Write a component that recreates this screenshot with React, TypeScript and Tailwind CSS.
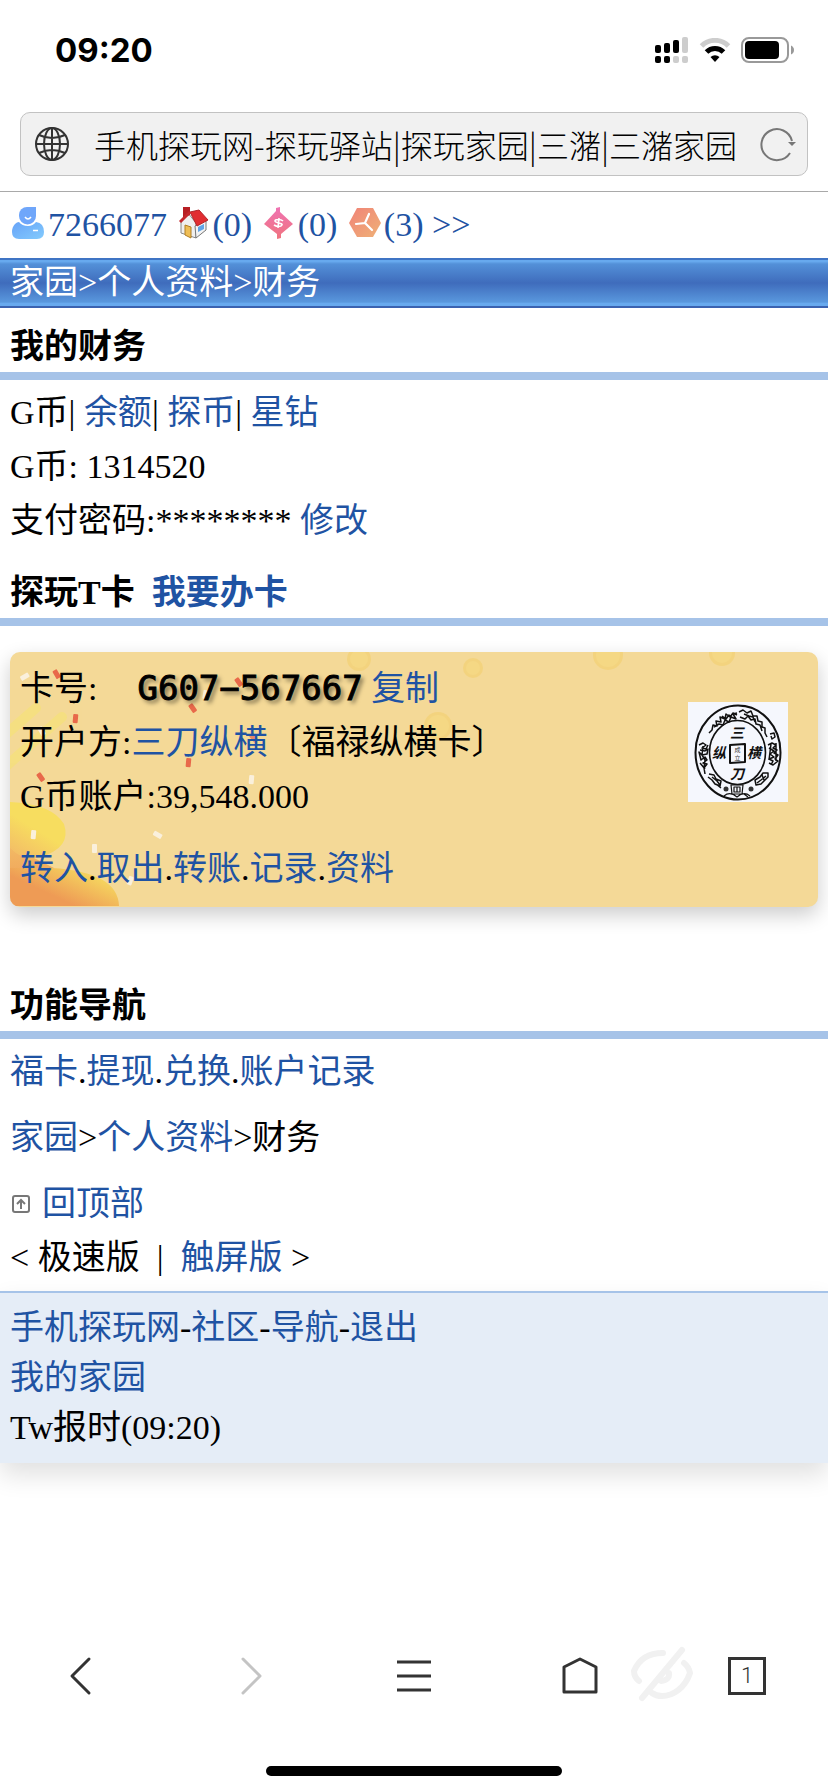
import type { ReactNode } from "react";

function A({ children }: { children: ReactNode }) {
  return (
    <a href="#" className="text-[#1f53a3]">
      {children}
    </a>
  );
}

function SectionTitle({ children }: { children: ReactNode }) {
  return (
    <h2 className="border-b-8 border-[#a6c3e8] px-[10px] pt-[14px] text-[34px] leading-[50px] font-bold">
      {children}
    </h2>
  );
}

function StatusBar() {
  return (
    <div className="flex h-[100px] items-center justify-between pr-[33px] pl-[55px]">
      <span className="font-[Inter,sans-serif] text-[33px] leading-none font-bold">09:20</span>
      <div className="flex items-center gap-[10px]">
        <svg width="34" height="26" viewBox="0 0 34 26" aria-hidden="true">
          <rect x="0" y="8" width="6" height="8" rx="2" />
          <rect x="9" y="6" width="6" height="10" rx="2" />
          <rect x="18" y="3" width="6" height="13" rx="2" />
          <rect x="27" y="0" width="6" height="16" rx="2" fill="#cdcdcd" />
          <rect x="0" y="19" width="6" height="7" rx="2" />
          <rect x="9" y="19" width="6" height="7" rx="2" />
          <rect x="18" y="19" width="6" height="7" rx="2" fill="#cdcdcd" />
          <rect x="27" y="19" width="6" height="7" rx="2" fill="#cdcdcd" />
        </svg>
        <svg width="32" height="24" viewBox="0 0 32 24" fill="none" aria-hidden="true">
          <path d="M2.500 8A19 19 0 0 1 29.500 8" stroke="#cdcdcd" strokeWidth="5" />
          <path d="M7.500 14A12 12 0 0 1 24.500 14" stroke="#000" strokeWidth="5" />
          <path d="M16 24l-4.500-5a7 7 0 0 1 9 0z" fill="#000" />
        </svg>
        <svg width="54" height="26" viewBox="0 0 54 26" aria-hidden="true">
          <rect x="1" y="1" width="46" height="24" rx="7" fill="none" stroke="#999" strokeWidth="2" />
          <rect x="4" y="4" width="34" height="18" rx="4" />
          <path d="M50 8.500q3 1.500 3 4.500t-3 4.500z" fill="#999" />
        </svg>
      </div>
    </div>
  );
}

function AddressBar() {
  return (
    <div className="border-b border-[#a9a9a9] px-5 pt-3 pb-[15px]">
      <div className="flex h-16 items-center rounded-[10px] border border-[#c2c2c2] bg-[#f1f1f1] pr-[11px] pl-[13px]">
        <svg width="36" height="36" viewBox="0 0 36 36" fill="none" stroke="#333" strokeWidth="2" aria-hidden="true">
          <circle cx="18" cy="18" r="16" />
          <ellipse cx="18" cy="18" rx="8" ry="16" />
          <path d="M18 2v32M2 18h32M5 9q13 6 26 0M5 27q13-6 26 0" />
        </svg>
        <button className="min-w-0 flex-1 overflow-hidden pl-6 text-left font-['Noto_Sans_CJK_SC',sans-serif] text-[32px] leading-[48px] font-light whitespace-nowrap">
          手机探玩网-探玩驿站|探玩家园|三潴|三潴家园
        </button>
        <button aria-label="刷新">
          <svg width="36" height="36" viewBox="0 0 36 36" aria-hidden="true">
            <path d="M30 27A15.500 15.500 0 1 1 32 15" fill="none" stroke="#777" strokeWidth="2" />
            <path d="M28 16h8l-4 4z" fill="#777" />
          </svg>
        </button>
      </div>
    </div>
  );
}

function UserIcon() {
  return (
    <svg className="inline-block align-[-3px]" width="32" height="32" viewBox="0 0 32 32" aria-hidden="true">
      <defs>
        <linearGradient id="user" x1="0" y1="0" x2="1" y2="1">
          <stop offset="0" stopColor="#67a3f8" />
          <stop offset="1" stopColor="#83cbfd" />
        </linearGradient>
      </defs>
      <path d="M7 15q-2 0-4 2-3 3-3 8 0 7 7 7h18q7 0 7-7 0-9-8-10-3 4-8 4-6 0-9-4z" fill="url(#user)" />
      <path d="M7 8a8 8 0 0 1 8-8h9v9a8.500 8.500 0 0 1-17 0z" fill="#6fa6fa" />
      <path d="M13 10q3 4 6 0M21 23.500h5" fill="none" stroke="#fff" strokeWidth="1.500" />
    </svg>
  );
}

function HouseIcon() {
  return (
    <svg className="inline-block align-[-3px]" width="30" height="32" viewBox="0 0 30 32" aria-hidden="true">
      <path d="M2 13l7-7 8 10v15L2 26z" fill="#efefef" stroke="#8a8a8a" />
      <path d="M16 19l11-7v11l-10 8z" fill="#f3f3f3" stroke="#777" />
      <path d="M6 18l6 2v11l-6-3z" fill="#efbe55" stroke="#b07e24" />
      <path d="M19 20l6-3v5l-6 3z" fill="#60a5e8" />
      <path d="M4 0h7v8l-7 3z" fill="#b71f24" />
      <path d="M11 5L20 3l9 10-11 6z" fill="#e12d31" stroke="#b3252a" />
      <path d="M11 5L1 15" stroke="#c4272c" strokeWidth="3" />
    </svg>
  );
}

function GemIcon() {
  return (
    <svg className="inline-block align-[-3px]" width="30" height="32" viewBox="0 0 30 32" aria-hidden="true">
      <defs>
        <linearGradient id="gem" x1="0" y1="0" x2="0" y2="1">
          <stop offset="0" stopColor="#ef73b3" />
          <stop offset="1" stopColor="#f0747f" />
        </linearGradient>
      </defs>
      <path d="M0 17L12 4V1l4-1v5l13 12-12 10v4l-4 1v-5z" fill="url(#gem)" />
      <path d="M19 14c-2-2-8-2-8 0s8 2 7 4-5 2-8 0M15 11l-1 10" fill="none" stroke="#fff" strokeWidth="1.600" />
    </svg>
  );
}

function HexIcon() {
  return (
    <svg className="inline-block align-[-3px]" width="32" height="32" viewBox="0 0 32 32" aria-hidden="true">
      <defs>
        <linearGradient id="hex" x1="0" y1="0" x2="1" y2="1">
          <stop offset="0" stopColor="#f08377" />
          <stop offset="1" stopColor="#efb177" />
        </linearGradient>
      </defs>
      <path d="M8 1h16l8 15-8 14H8L0 16z" fill="url(#hex)" />
      <path d="M20 7l-4 9-9 1M16 16l7 7" fill="none" stroke="#fff" strokeWidth="2.200" strokeLinecap="round" />
    </svg>
  );
}

function UserRow() {
  return (
    <div className="px-3 pt-[10px] pb-[10px] text-[34px] leading-[46px] whitespace-nowrap">
      <A>
        <UserIcon />
        <span className="pl-1">7266077</span>
      </A>{" "}
      <span className="pl-[3px]">
        <A>
          <HouseIcon />
          <span className="pl-1">(0)</span>
        </A>
      </span>{" "}
      <span className="pl-[3px]">
        <A>
          <GemIcon />
          <span className="pl-1">(0)</span>
        </A>
      </span>{" "}
      <span className="pl-[3px]">
        <A>
          <HexIcon />
          <span className="pl-[3px]">(3)</span>
        </A>
      </span>{" "}
      <A>&gt;&gt;</A>
    </div>
  );
}

// faded gold coins along the top of the card
const coins = [
  { x: 349, y: 7, r: 12 },
  { x: 463, y: 16, r: 10 },
  { x: 428, y: 74, r: 14 },
  { x: 598, y: 3, r: 15 },
  { x: 712, y: 1, r: 13 },
];

const confetti = [
  { x: 46, y: 22, a: -30, c: "#e8694a" },
  { x: 228, y: 30, a: -35, c: "#e8694a" },
  { x: 182, y: 56, a: -35, c: "#e8694a" },
  { x: 65, y: 66, a: 5, c: "#e8694a" },
  { x: 178, y: 110, a: 5, c: "#e8694a" },
  { x: 30, y: 125, a: -35, c: "#e8694a" },
  { x: 243, y: 86, a: -40, c: "#e88a66" },
  { x: 15, y: 24, a: 60, c: "#faf0dc" },
  { x: 195, y: 42, a: 10, c: "#faf0dc" },
  { x: 31, y: 79, a: -30, c: "#faf0dc" },
  { x: 241, y: 127, a: 5, c: "#faf0dc" },
  { x: 147, y: 183, a: -60, c: "#faf0dc" },
  { x: 23, y: 182, a: 5, c: "#faf0dc" },
  { x: 84, y: 196, a: 0, c: "#faf0dc" },
  { x: 120, y: 228, a: 20, c: "#faf0dc" },
];

function CardArt() {
  return (
    <svg className="absolute top-0 left-0" width="808" height="254" viewBox="0 0 808 254" aria-hidden="true">
      <defs>
        <linearGradient id="blobTop" x1="0.800" y1="0" x2="0.200" y2="1">
          <stop offset="0.500" stopColor="#f7dd5f" />
          <stop offset="1" stopColor="#f3bd66" />
        </linearGradient>
        <linearGradient id="blobBottom" x1="1" y1="0.200" x2="0.200" y2="0.800">
          <stop offset="0.100" stopColor="#f6dc60" />
          <stop offset="0.800" stopColor="#ee9b55" />
        </linearGradient>
        <linearGradient id="blobFade" x1="0" y1="0" x2="0" y2="1">
          <stop offset="0" stopColor="#f3bd66" />
          <stop offset="1" stopColor="#f0a35a" />
        </linearGradient>
      </defs>
      <g stroke="#f5e07c" strokeWidth="10" strokeLinecap="round">
        <path d="M-6 84L26 56M-6 116L52 65" opacity="0.800" />
      </g>
      <path d="M0 190L24 206 44 216V230H0z" fill="url(#blobFade)" />
      <path d="M0 150Q42 152 54 172Q62 196 30 205Q14 210 0 196z" fill="url(#blobTop)" />
      <path d="M0 216H42Q108 220 109 254H0z" fill="url(#blobBottom)" />
      {coins.map((c) => (
        <g key={c.x} opacity="0.500">
          <circle cx={c.x} cy={c.y} r={c.r} fill="#f3cf66" />
          <circle cx={c.x} cy={c.y} r={c.r - 3} fill="#f6d873" />
        </g>
      ))}
      {confetti.map((p) => (
        <rect
          key={`${p.x}-${p.y}`}
          x={p.x - 2}
          y={p.y - 4}
          width="5"
          height="9"
          rx="1"
          fill={p.c}
          transform={`rotate(${p.a} ${p.x} ${p.y})`}
        />
      ))}
    </svg>
  );
}

function Seal() {
  return (
    <svg className="bg-[#f5f7fd] font-['Noto_Sans_CJK_SC',sans-serif]" width="100" height="100" viewBox="0 0 100 100" role="img" aria-label="三刀纵横">
      <g fill="none" stroke="#111" strokeLinejoin="round">
        <ellipse cx="50" cy="50.500" rx="42.500" ry="47" strokeWidth="2" />
        <ellipse cx="49.500" cy="50.500" rx="28" ry="32" strokeWidth="1.600" />
        <path d="M21 31l3-3 1-5 4 1-1-5 5 1-1-5 5 2 1-5 4 3 3-4 4 2M26 25l5-3 4 1 2-5 4 2 2-5 5 2-3-5 4-1M34 14l4 3 3-4 4 3" strokeWidth="1.500" />
        <path d="M51 10l4-2 4 3 4-2 2 5 4 0 1 5 4 1 0 5 3 1 0 5 2 4M52 15l5 2 3-3 3 4 4-1 1 5 4 1 2 6M56 12l5 2 4 1 2 5" strokeWidth="1.500" />
        <path d="M11 43l4-2 3 2-4 3 4 1 2-4M12 48l5 1 3-2-1 5-5 1-3-3 2 8 4-3 2 3-4 3 4 1-3 4 1 6M15 44l-1 9 3 5-1 8M12 61l5 6" strokeWidth="1.500" />
        <path d="M82 32l4-1 1 4-3 2-1-3M80 43l4-2 4 2-3 3 4 2-3 3 4 2-3 4 3 2-5 4-4-2M81 46l5 3-4 3 4 3-5 2 4 2-2 4M88 41l0 18M83 42l-2 16" strokeWidth="1.500" />
        <path d="M21 72l5 1 2 4 5 2-1 5-5-2-3-4-4-3M24 75l5 4 3 4M28 82l5 4" strokeWidth="1.500" />
        <path d="M80 71l-5 0-3 4-5 3 1 5 5-1 4-4 3-3zM78 74l-5 4-4 3M74 73l2 5" strokeWidth="1.500" />
        <path d="M43 83h12l-1 9H44zM46 85h6v5h-6zM49 85v5M36 94q6-5 13 1 7-6 13-1M56 92l4 3" strokeWidth="1.200" />
        <path d="M42 43l15-1 0 18-15 1z" strokeWidth="2" />
      </g>
      <circle cx="38" cy="87" r="2.500" fill="#333" />
      <circle cx="63" cy="87" r="2.500" fill="#333" />
      <g fill="#111" fontSize="14" fontWeight="700" fontStyle="italic" textAnchor="middle">
        <text x="49" y="36">三</text>
        <text x="31" y="56">纵</text>
        <text x="66" y="56">横</text>
        <text x="49" y="77">刀</text>
      </g>
      <g fill="#333" fontSize="6" textAnchor="middle">
        <text x="49.500" y="50">成</text>
        <text x="49.500" y="58">立</text>
      </g>
    </svg>
  );
}

function CardPanel() {
  return (
    <section className="relative mx-[10px] mt-[26px] overflow-hidden rounded-[10px] bg-[#f4d997] text-[34px] leading-[54px] shadow-[0_8px_20px_rgba(0,0,0,0.2)]">
      <CardArt />
      <div className="relative flex items-start justify-between pt-[9px] pr-[30px] pb-[11px] pl-[10px]">
        <div>
          <p>
            卡号:
            <span className="ml-10 font-['DejaVu_Sans_Mono',monospace] [-webkit-text-stroke:1px_#000] text-shadow-[3px_3px_4px_rgba(0,0,0,0.5)]">G607−567667</span>{" "}
            <button className="text-[#1f53a3]">复制</button>
          </p>
          <p>
            开户方:<A>三刀纵横</A>〔福禄纵横卡〕
          </p>
          <p>G币账户:39,548.000</p>
          <p className="mt-[18px]">
            <A>转入</A>.<A>取出</A>.<A>转账</A>.<A>记录</A>.<A>资料</A>
          </p>
        </div>
        <div className="pt-[41px]">
          <Seal />
        </div>
      </div>
    </section>
  );
}

function Toolbar() {
  return (
    <nav className="flex items-center justify-between px-[62px]">
      <button aria-label="后退">
        <svg width="36" height="40" viewBox="0 0 36 40" fill="none" stroke="#333" strokeWidth="3" strokeLinecap="round" strokeLinejoin="round">
          <path d="M27 3L10 20l17 17" />
        </svg>
      </button>
      <button aria-label="前进">
        <svg width="36" height="40" viewBox="0 0 36 40" fill="none" stroke="#c4c4c4" strokeWidth="3" strokeLinecap="round" strokeLinejoin="round">
          <path d="M14 3l17 17-17 17" />
        </svg>
      </button>
      <button aria-label="菜单">
        <svg width="36" height="40" viewBox="0 0 36 40" stroke="#333" strokeWidth="3">
          <path d="M2 6h34M2 20h34M2 34h34" />
        </svg>
      </button>
      <button aria-label="主页">
        <svg width="36" height="40" viewBox="0 0 36 40" fill="none" stroke="#333" strokeWidth="3" strokeLinejoin="round">
          <path d="M2 11L18 3l16 8v25H2z" />
        </svg>
      </button>
      <button aria-label="标签页" className="flex size-[38px] items-center justify-center border-[3px] border-[#333] font-[Roboto,sans-serif] text-[22px] leading-none font-light text-[#333]">
        1
      </button>
    </nav>
  );
}

export default function App() {
  return (
    <div className="flex min-h-screen flex-col bg-white font-['Liberation_Serif','Noto_Sans_CJK_SC',serif] text-black">
      <StatusBar />
      <AddressBar />
      <UserRow />
      <nav className="bg-[linear-gradient(#3f74c4_0,#3f74c4_3%,#67a9ee_4%,#67a9ee_7%,#5390d8_12%,#3f6cbc_50%,#5997dd_88%,#67a9ee_91%,#67a9ee_95%,#3a62b0_96%)] px-[10px] text-[34px] leading-[50px] text-white">
        <a href="#">家园</a>&gt;<a href="#">个人资料</a>&gt;财务
      </nav>
      <main className="text-[34px] leading-[54px]">
        <SectionTitle>我的财务</SectionTitle>
        <div className="px-[10px] pt-[6px]">
          <p>
            G币| <A>余额</A>| <A>探币</A>| <A>星钻</A>
          </p>
          <p>G币: 1314520</p>
          <p>
            支付密码:******** <A>修改</A>
          </p>
        </div>
        <div className="pt-[6px]">
          <SectionTitle>
            探玩T卡&nbsp; <A>我要办卡</A>
          </SectionTitle>
        </div>
        <CardPanel />
        <div className="pt-[60px]">
          <SectionTitle>功能导航</SectionTitle>
        </div>
        <div className="px-[10px] pt-[6px] pb-[6px]">
          <p>
            <A>福卡</A>.<A>提现</A>.<A>兑换</A>.<A>账户记录</A>
          </p>
          <p className="mt-3">
            <A>家园</A>&gt;<A>个人资料</A>&gt;财务
          </p>
          <p className="mt-3 flex items-center">
            <svg className="mr-3 ml-[2px]" width="18" height="18" viewBox="0 0 18 18" fill="none" stroke="#777" strokeWidth="2" aria-hidden="true">
              <rect x="1" y="1" width="16" height="16" rx="2" />
              <path d="M9 14V5M5 9l4-4 4 4" />
            </svg>
            <A>回顶部</A>
          </p>
          <p>
            &lt; 极速版&nbsp; |&nbsp; <A>触屏版</A> &gt;
          </p>
        </div>
      </main>
      <footer className="border-t-2 border-[#a6c3e8] bg-[#e5edf7] px-[10px] pt-[10px] pb-[10px] text-[34px] leading-[50px] shadow-[0_12px_24px_rgba(0,0,0,0.12)]">
        <p>
          <A>手机探玩网</A>-<A>社区</A>-<A>导航</A>-<A>退出</A>
        </p>
        <p>
          <A>我的家园</A>
        </p>
        <p>Tw报时(09:20)</p>
      </footer>
      <div className="relative mt-auto pb-4">
        <svg className="absolute -top-[10px] left-[631px]" width="64" height="56" viewBox="0 0 64 56" fill="none" stroke="#f1f1f1" strokeWidth="6" strokeLinecap="round" aria-hidden="true">
          <path d="M32 7C18 7 8 13 3 25q0 6 5 10M53 17q5 4 6 10C54 42 42 50 31 50q-6 0-10-3M51 4L11 52M38 27q1 7-8 8" />
        </svg>
        <Toolbar />
        <div className="mx-auto mt-[70px] h-[10px] w-[296px] rounded-full bg-black" />
      </div>
    </div>
  );
}
